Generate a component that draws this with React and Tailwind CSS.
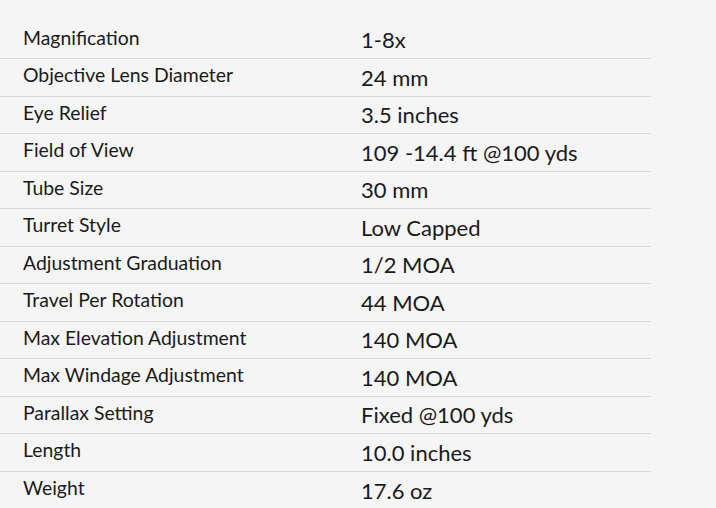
const rows = [
  ["Magnification", "1-8x"],
  ["Objective Lens Diameter", "24 mm"],
  ["Eye Relief", "3.5 inches"],
  ["Field of View", "109 -14.4 ft @100 yds"],
  ["Tube Size", "30 mm"],
  ["Turret Style", "Low Capped"],
  ["Adjustment Graduation", "1/2 MOA"],
  ["Travel Per Rotation", "44 MOA"],
  ["Max Elevation Adjustment", "140 MOA"],
  ["Max Windage Adjustment", "140 MOA"],
  ["Parallax Setting", "Fixed @100 yds"],
  ["Length", "10.0 inches"],
  ["Weight", "17.6 oz"],
];

export default function App() {
  return (
    <div className="w-[716px] h-[508px] overflow-hidden bg-[#f5f5f5] pt-[21.5px]" style={{ fontFamily: "Lato, 'Noto Sans', sans-serif" }}>
      <div className="w-[651px] flex flex-col">
        {rows.map(([k, v], i) => (
          <div key={k} className={`flex items-center h-[37.5px] ${i < rows.length - 1 ? "border-b border-[#d9d9d9]" : ""}`}>
            <div className="w-[361px] pl-[23px] text-[19.4px] text-[#1a1a1a] -mt-[5px]">{k}</div>
            <div className="flex-1 text-[22px] text-[#1a1a1a]">{v}</div>
          </div>
        ))}
      </div>
    </div>
  );
}
